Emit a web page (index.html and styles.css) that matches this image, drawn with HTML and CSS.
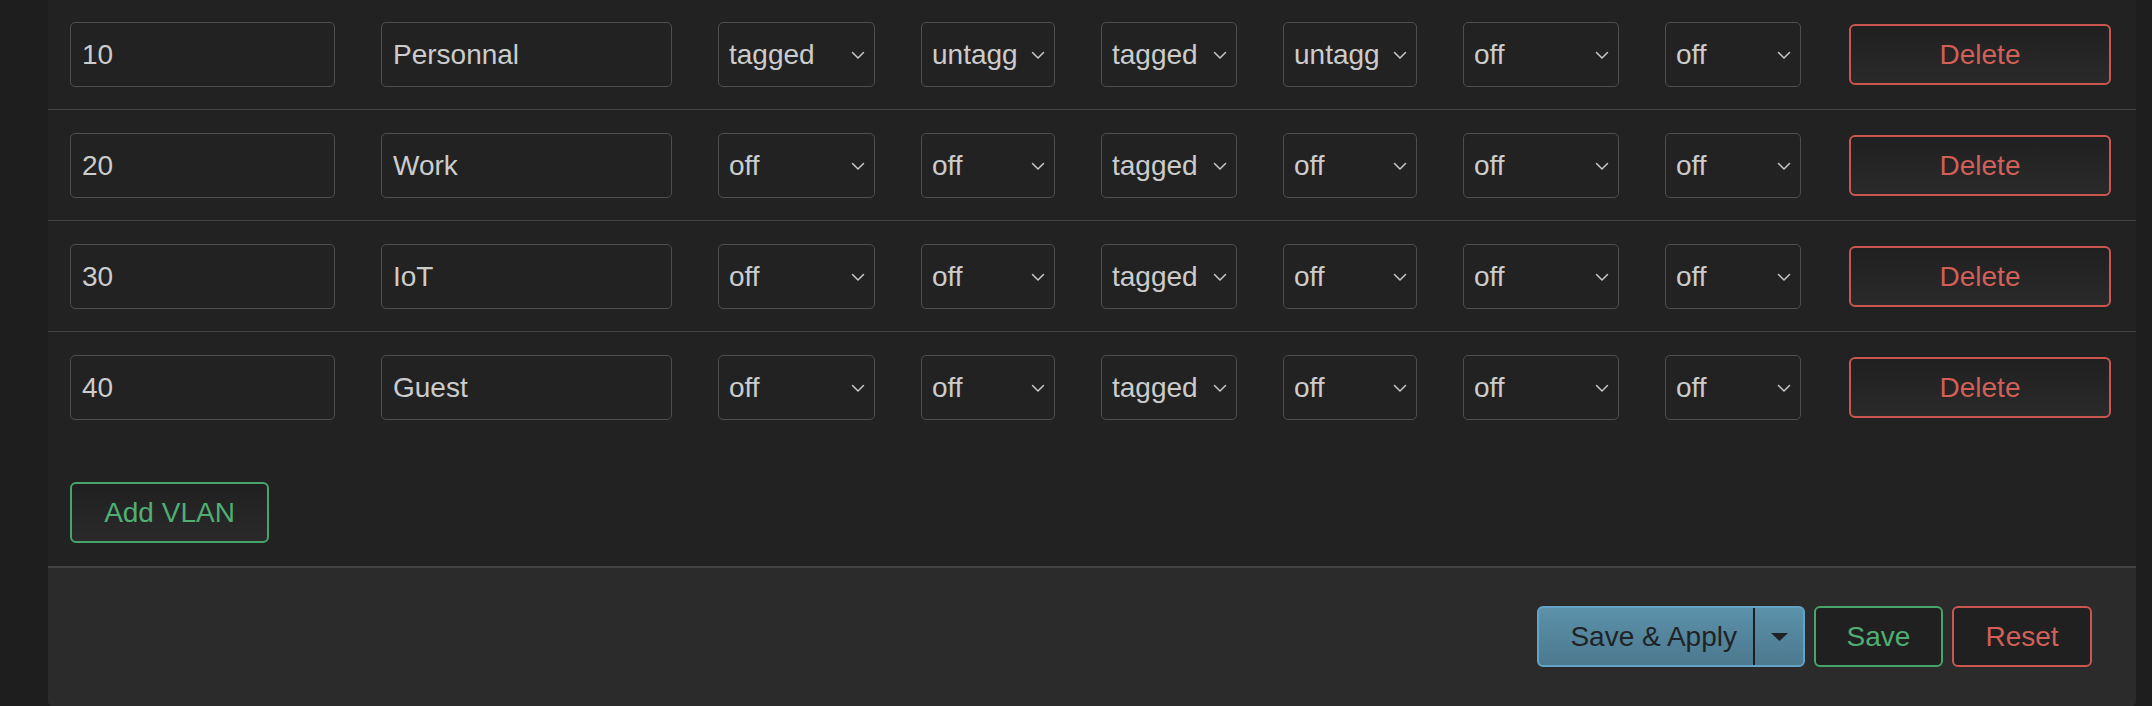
FILE: index.html
```html
<!DOCTYPE html>
<html lang="en">
<head>
<meta charset="utf-8">
<title>VLAN</title>
<link rel="stylesheet" href="styles.css">
</head>
<body>
<div class="page">
  <div class="panel">
    <div class="table">
      <div class="row first">
        <input class="field id" type="text" value="10">
        <input class="field name" type="text" value="Personnal">
        <div class="select"><span class="val">tagged</span><svg class="chev" viewBox="0 0 14 9"><polyline points="1.5,1.5 7,7 12.5,1.5"/></svg></div>
        <div class="select"><span class="val">untagged</span><svg class="chev" viewBox="0 0 14 9"><polyline points="1.5,1.5 7,7 12.5,1.5"/></svg></div>
        <div class="select"><span class="val">tagged</span><svg class="chev" viewBox="0 0 14 9"><polyline points="1.5,1.5 7,7 12.5,1.5"/></svg></div>
        <div class="select"><span class="val">untagged</span><svg class="chev" viewBox="0 0 14 9"><polyline points="1.5,1.5 7,7 12.5,1.5"/></svg></div>
        <div class="select"><span class="val">off</span><svg class="chev" viewBox="0 0 14 9"><polyline points="1.5,1.5 7,7 12.5,1.5"/></svg></div>
        <div class="select"><span class="val">off</span><svg class="chev" viewBox="0 0 14 9"><polyline points="1.5,1.5 7,7 12.5,1.5"/></svg></div>
        <button class="btn danger del">Delete</button>
      </div>
      <div class="row">
        <input class="field id" type="text" value="20">
        <input class="field name" type="text" value="Work">
        <div class="select"><span class="val">off</span><svg class="chev" viewBox="0 0 14 9"><polyline points="1.5,1.5 7,7 12.5,1.5"/></svg></div>
        <div class="select"><span class="val">off</span><svg class="chev" viewBox="0 0 14 9"><polyline points="1.5,1.5 7,7 12.5,1.5"/></svg></div>
        <div class="select"><span class="val">tagged</span><svg class="chev" viewBox="0 0 14 9"><polyline points="1.5,1.5 7,7 12.5,1.5"/></svg></div>
        <div class="select"><span class="val">off</span><svg class="chev" viewBox="0 0 14 9"><polyline points="1.5,1.5 7,7 12.5,1.5"/></svg></div>
        <div class="select"><span class="val">off</span><svg class="chev" viewBox="0 0 14 9"><polyline points="1.5,1.5 7,7 12.5,1.5"/></svg></div>
        <div class="select"><span class="val">off</span><svg class="chev" viewBox="0 0 14 9"><polyline points="1.5,1.5 7,7 12.5,1.5"/></svg></div>
        <button class="btn danger del">Delete</button>
      </div>
      <div class="row">
        <input class="field id" type="text" value="30">
        <input class="field name" type="text" value="IoT">
        <div class="select"><span class="val">off</span><svg class="chev" viewBox="0 0 14 9"><polyline points="1.5,1.5 7,7 12.5,1.5"/></svg></div>
        <div class="select"><span class="val">off</span><svg class="chev" viewBox="0 0 14 9"><polyline points="1.5,1.5 7,7 12.5,1.5"/></svg></div>
        <div class="select"><span class="val">tagged</span><svg class="chev" viewBox="0 0 14 9"><polyline points="1.5,1.5 7,7 12.5,1.5"/></svg></div>
        <div class="select"><span class="val">off</span><svg class="chev" viewBox="0 0 14 9"><polyline points="1.5,1.5 7,7 12.5,1.5"/></svg></div>
        <div class="select"><span class="val">off</span><svg class="chev" viewBox="0 0 14 9"><polyline points="1.5,1.5 7,7 12.5,1.5"/></svg></div>
        <div class="select"><span class="val">off</span><svg class="chev" viewBox="0 0 14 9"><polyline points="1.5,1.5 7,7 12.5,1.5"/></svg></div>
        <button class="btn danger del">Delete</button>
      </div>
      <div class="row">
        <input class="field id" type="text" value="40">
        <input class="field name" type="text" value="Guest">
        <div class="select"><span class="val">off</span><svg class="chev" viewBox="0 0 14 9"><polyline points="1.5,1.5 7,7 12.5,1.5"/></svg></div>
        <div class="select"><span class="val">off</span><svg class="chev" viewBox="0 0 14 9"><polyline points="1.5,1.5 7,7 12.5,1.5"/></svg></div>
        <div class="select"><span class="val">tagged</span><svg class="chev" viewBox="0 0 14 9"><polyline points="1.5,1.5 7,7 12.5,1.5"/></svg></div>
        <div class="select"><span class="val">off</span><svg class="chev" viewBox="0 0 14 9"><polyline points="1.5,1.5 7,7 12.5,1.5"/></svg></div>
        <div class="select"><span class="val">off</span><svg class="chev" viewBox="0 0 14 9"><polyline points="1.5,1.5 7,7 12.5,1.5"/></svg></div>
        <div class="select"><span class="val">off</span><svg class="chev" viewBox="0 0 14 9"><polyline points="1.5,1.5 7,7 12.5,1.5"/></svg></div>
        <button class="btn danger del">Delete</button>
      </div>
    </div>
    <div class="actions">
      <button class="btn success add">Add VLAN</button>
    </div>
    <div class="footer">
      <div class="split">
        <button class="split-main">Save &amp; Apply</button>
        <button class="split-caret"><svg class="caret" viewBox="0 0 17 8"><polygon points="0,0 17,0 8.5,8"/></svg></button>
      </div>
      <button class="btn success save">Save</button>
      <button class="btn danger reset">Reset</button>
    </div>
  </div>
</div>
</body>
</html>
```

FILE: styles.css
```css
html, body {
  margin: 0;
  padding: 0;
}

body {
  background: #1e1e1e;
  font-family: "Liberation Sans", Arial, Helvetica, sans-serif;
  font-size: 28px;
  color: #cccccc;
  height: 706px;
  overflow: hidden;
}

.page {
  padding: 0 16px 0 48px;
}

.panel {
  background: #222222;
  border-radius: 0 0 6px 6px;
}

.row {
  display: grid;
  grid-template-columns: 265px 291px 157px 134px 136px 134px 156px 136px 262px;
  column-gap: 46px;
  align-items: center;
  padding: 23px 22px 22px 22px;
  border-top: 1px solid #444444;
}

.row.first {
  border-top: none;
  padding-top: 22px;
}

.field {
  box-sizing: border-box;
  height: 65px;
  width: 100%;
  margin: 0;
  padding: 0 11px;
  background: #222222;
  border: 1px solid #4e4e4e;
  border-radius: 5px;
  color: #cccccc;
  font-family: "Liberation Sans", Arial, Helvetica, sans-serif;
  font-size: 28px;
  outline: none;
}

.select {
  box-sizing: border-box;
  height: 65px;
  display: flex;
  align-items: center;
  padding: 0 9px 0 10px;
  background: #222222;
  border: 1px solid #4e4e4e;
  border-radius: 5px;
  color: #cccccc;
  overflow: hidden;
}

.val {
  flex: 1 1 auto;
  min-width: 0;
  overflow: hidden;
  white-space: nowrap;
  text-overflow: clip;
  margin-right: 13px;
}

.chev {
  flex: 0 0 14px;
  width: 14px;
  height: 9px;
  margin-top: 2px;
  fill: none;
  stroke: #c8c8c8;
  stroke-width: 1.5;
  stroke-linecap: round;
  stroke-linejoin: round;
}

.btn {
  box-sizing: border-box;
  height: 61px;
  margin: 0;
  padding: 0 31px;
  border-radius: 6px;
  border: 2px solid;
  font-family: "Liberation Sans", Arial, Helvetica, sans-serif;
  font-size: 28px;
  background: linear-gradient(#202020, #2a2a2a);
  cursor: pointer;
}

.danger {
  border-color: #c9574f;
  color: #d25f58;
}

.success {
  border-color: #45a56b;
  color: #4fae74;
}

.del {
  width: 262px;
  margin-left: 2px;
}

.actions {
  padding: 40px 22px 23px 22px;
}

.add {
  width: 199px;
  padding: 0;
}

.footer {
  display: flex;
  justify-content: flex-end;
  align-items: center;
  gap: 9px;
  background: #2b2b2b;
  border-top: 2px solid #444444;
  border-radius: 0 0 6px 6px;
  padding: 38px 44px 40px 0;
}

.split {
  display: flex;
  height: 61px;
  box-sizing: border-box;
  border: 2px solid #62a3c7;
  border-radius: 6px;
  background: linear-gradient(#5b91aa, #4c798e);
  overflow: hidden;
}

.split-main {
  margin: 0;
  border: none;
  background: transparent;
  color: #1f2326;
  font-family: "Liberation Sans", Arial, Helvetica, sans-serif;
  font-size: 28px;
  padding: 0 16px 0 31px;
  border-right: 2px solid #1c1c1c;
}

.split-caret {
  margin: 0;
  border: none;
  background: transparent;
  width: 48px;
  padding: 0;
  display: flex;
  align-items: center;
  justify-content: center;
}

.caret {
  width: 17px;
  height: 8px;
  fill: #1f2326;
}

.save {
  width: 129px;
  padding: 0;
  background: #202020;
}

.reset {
  width: 140px;
  padding: 0;
  background: #202020;
}
```
